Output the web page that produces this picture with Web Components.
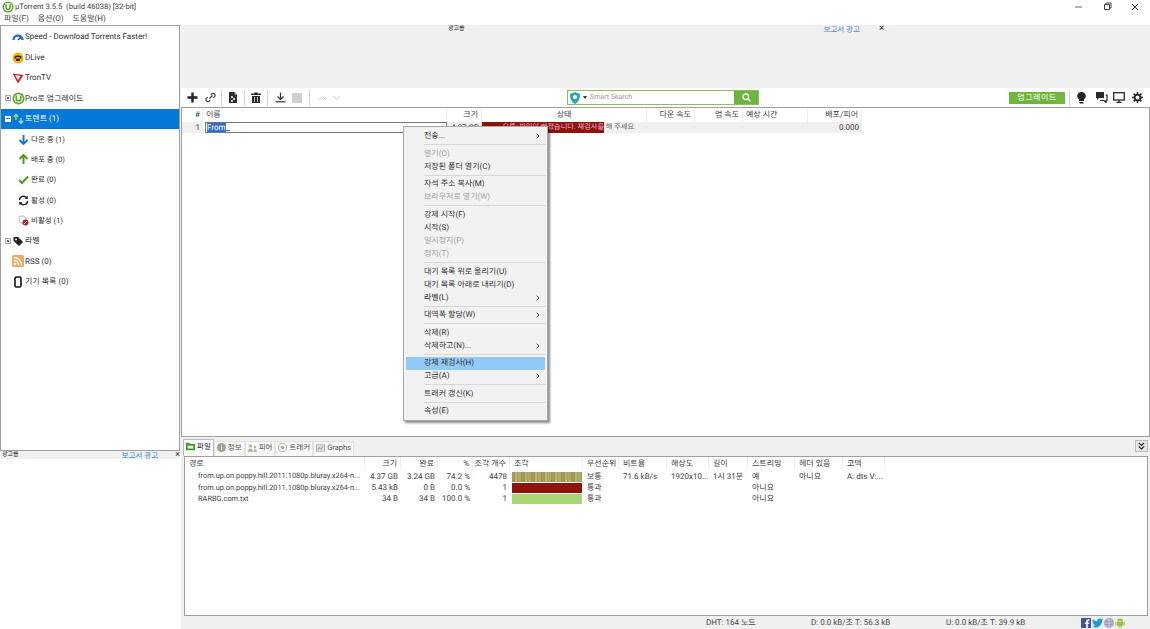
<!DOCTYPE html>
<html lang="ko">
<head>
<meta charset="utf-8">
<title>uTorrent</title>
<style>
  html, body { height: 100%; }
  body {
    margin: 0;
    height: 629px;
    overflow: hidden;
    display: flex;
    flex-direction: column;
    background: #f0f0f0;
    color: #333;
    font: 8px/1.2 Roboto, "Noto Sans CJK KR", sans-serif;
    text-rendering: geometricPrecision;
  }
</style>
</head>
<body>
  <ut-titlebar>µTorrent 3.5.5 &nbsp;(build 46038) [32-bit]</ut-titlebar>
  <ut-menubar></ut-menubar>
  <ut-main>
    <ut-sidebar slot="side">
      <ut-tree-item>
        <svg slot="icon" width="12" height="10" viewBox="0 0 12 10"><path d="M1.500 8a4.500 4.500 0 0 1 9 0" fill="none" stroke="#2f6fc4" stroke-width="2.500"/><path d="M6 8l3-3" stroke="#1c3f78" stroke-width="1.400"/></svg>
        Speed - Download Torrents Faster!
      </ut-tree-item>
      <ut-tree-item>
        <svg slot="icon" width="12" height="12" viewBox="0 0 12 12"><circle cx="6" cy="6" r="5.500" fill="#f4b410"/><path d="M2.500 5c1-2 6-2 7 0v1.500H8L7.500 5h-3L4 6.500H2.500z" fill="#222"/><rect x="4" y="6.500" width="4" height="2.500" rx="1" fill="#222"/></svg>
        DLive
      </ut-tree-item>
      <ut-tree-item>
        <svg slot="icon" width="12" height="12" viewBox="0 0 12 12"><path d="M.5 1.500L11.500 3 6 11.500z" fill="#d9202c"/><path d="M3 3l5.500 1L6 8z" fill="#fff"/></svg>
        TronTV
      </ut-tree-item>
      <ut-tree-item toggle="plus">
        <svg slot="icon" width="13" height="13" viewBox="0 0 13 13"><circle cx="6.500" cy="6.500" r="6" fill="#5da72f"/><circle cx="6.500" cy="6.500" r="4.300" fill="#fff"/><path d="M4.300 3.500v3.200a2.200 2.200 0 0 0 4.400 0V3.500" fill="none" stroke="#5da72f" stroke-width="1.700"/></svg>
        Pro로 업그레이드
      </ut-tree-item>
      <ut-tree-item toggle="minus" selected>
        <svg slot="icon" width="13" height="12" viewBox="0 0 13 12"><path d="M4 7V2M1.800 3.800L4 1.500l2.200 2.300" fill="none" stroke="#9bdc6a" stroke-width="1.500"/><path d="M9 5v5M6.800 8L9 10.400 11.200 8" fill="none" stroke="#9fd0f5" stroke-width="1.500"/></svg>
        토렌트 (1)
      </ut-tree-item>
      <ut-tree-item child>
        <svg slot="icon" width="11" height="11" viewBox="0 0 11 11"><path d="M5.500 1v8.500M1.500 6l4 4 4-4" fill="none" stroke="#2277cc" stroke-width="2"/></svg>
        다운 중 (1)
      </ut-tree-item>
      <ut-tree-item child>
        <svg slot="icon" width="11" height="11" viewBox="0 0 11 11"><path d="M5.500 10V1.500M1.500 5l4-4 4 4" fill="none" stroke="#4c9a22" stroke-width="2"/></svg>
        배포 중 (0)
      </ut-tree-item>
      <ut-tree-item child>
        <svg slot="icon" width="11" height="11" viewBox="0 0 11 11"><path d="M1 6l3 3 6-6.500" fill="none" stroke="#4c9a22" stroke-width="2"/></svg>
        완료 (0)
      </ut-tree-item>
      <ut-tree-item child>
        <svg slot="icon" width="11" height="11" viewBox="0 0 11 11"><path d="M1.500 5A4 4 0 0 1 8.800 3M9.500 6A4 4 0 0 1 2.200 8" fill="none" stroke="#222" stroke-width="1.500"/><path d="M9.800 .8v3.200H6.600zM1.200 10.200V7h3.200z" fill="#222"/></svg>
        활성 (0)
      </ut-tree-item>
      <ut-tree-item child>
        <svg slot="icon" width="11" height="11" viewBox="0 0 11 11"><circle cx="4.500" cy="4.500" r="3.500" fill="none" stroke="#ccc" stroke-width="1.500"/><circle cx="7.500" cy="7.500" r="3" fill="#c3182b"/><path d="M6 9l3-3" stroke="#fff"/></svg>
        비활성 (1)
      </ut-tree-item>
      <ut-tree-item toggle="plus">
        <svg slot="icon" width="11" height="11" viewBox="0 0 11 11"><path d="M.5 1h4.500l5 5-4 4-5.500-5z" fill="#222"/><circle cx="3" cy="3.500" r=".9" fill="#fff"/></svg>
        라벨
      </ut-tree-item>
      <ut-tree-item>
        <svg slot="icon" width="12" height="12" viewBox="0 0 12 12"><rect width="12" height="12" rx="1.500" fill="#f0a868"/><circle cx="3" cy="9" r="1.300" fill="#fff"/><path d="M2 5.500A4.500 4.500 0 0 1 6.500 10M2 2.500A7.500 7.500 0 0 1 9.500 10" fill="none" stroke="#fff" stroke-width="1.300"/></svg>
        RSS (0)
      </ut-tree-item>
      <ut-tree-item>
        <svg slot="icon" width="8" height="12" viewBox="0 0 8 12"><rect x="1" y="1" width="6" height="10" rx="1.500" fill="#fff" stroke="#111" stroke-width="1.600"/></svg>
        기기 목록 (0)
      </ut-tree-item>
    </ut-sidebar>
    <ut-ad-strip slot="side"></ut-ad-strip>

    <ut-top-ad></ut-top-ad>
    <ut-toolbar></ut-toolbar>
    <ut-torrent-table>
      <ut-context-menu>
        <ut-menu-item arrow>전송...</ut-menu-item>
        <ut-menu-sep></ut-menu-sep>
        <ut-menu-item disabled>열기(O)</ut-menu-item>
        <ut-menu-item>저장된 폴더 열기(C)</ut-menu-item>
        <ut-menu-sep></ut-menu-sep>
        <ut-menu-item>자석 주소 복사(M)</ut-menu-item>
        <ut-menu-item disabled>브라우저로 열기(W)</ut-menu-item>
        <ut-menu-sep></ut-menu-sep>
        <ut-menu-item>강제 시작(F)</ut-menu-item>
        <ut-menu-item>시작(S)</ut-menu-item>
        <ut-menu-item disabled>일시정지(P)</ut-menu-item>
        <ut-menu-item disabled>정지(T)</ut-menu-item>
        <ut-menu-sep></ut-menu-sep>
        <ut-menu-item>대기 목록 위로 올리기(U)</ut-menu-item>
        <ut-menu-item>대기 목록 아래로 내리기(D)</ut-menu-item>
        <ut-menu-item arrow>라벨(L)</ut-menu-item>
        <ut-menu-sep></ut-menu-sep>
        <ut-menu-item arrow>대역폭 할당(W)</ut-menu-item>
        <ut-menu-sep></ut-menu-sep>
        <ut-menu-item>삭제(R)</ut-menu-item>
        <ut-menu-item arrow>삭제하고(N)...</ut-menu-item>
        <ut-menu-sep></ut-menu-sep>
        <ut-menu-item active>강제 재검사(H)</ut-menu-item>
        <ut-menu-item arrow>고급(A)</ut-menu-item>
        <ut-menu-sep></ut-menu-sep>
        <ut-menu-item>트래커 갱신(K)</ut-menu-item>
        <ut-menu-sep></ut-menu-sep>
        <ut-menu-item>속성(E)</ut-menu-item>
      </ut-context-menu>
    </ut-torrent-table>
    <ut-tabs></ut-tabs>
    <ut-file-table></ut-file-table>
    <ut-statusbar></ut-statusbar>
  </ut-main>

<script>
class UtTitlebar extends HTMLElement {
  constructor(){
    super();
    this.attachShadow({mode: "open"});
  }
  connectedCallback(){
    this.shadowRoot.innerHTML = /* html */`
    <style>
      :host { display: flex; align-items: center; height: 13px; background: #fff; padding-left: 2px; gap: 1px; color: #444; font-size: 7.6px; }
      .buttons { margin-left: auto; display: flex; margin-right: 1px; }
      .buttons svg { width: 28px; height: 12px; }
    </style>
    <svg width="12" height="12" viewBox="0 0 13 13"><circle cx="6.500" cy="6.500" r="6" fill="#5da72f"/><circle cx="6.500" cy="6.500" r="4.300" fill="#fff"/><path d="M4.300 3.500v3.200a2.200 2.200 0 0 0 4.400 0V3.500" fill="none" stroke="#5da72f" stroke-width="1.700"/></svg>
    <slot></slot>
    <div class="buttons">
      <svg viewBox="0 0 28 12"><path d="M10 6h7" stroke="#666"/></svg>
      <svg viewBox="0 0 28 12"><path d="M11.500 3.500h5v5h-5zM13 3.500V2h5v5h-1.500" fill="none" stroke="#444"/></svg>
      <svg viewBox="0 0 28 12"><path d="M11 3l6 6M17 3l-6 6" stroke="#444"/></svg>
    </div>`;
  }
}

class UtMenubar extends HTMLElement {
  constructor(){
    super();
    this.attachShadow({mode: "open"});
  }
  connectedCallback(){
    this.shadowRoot.innerHTML = /* html */`
    <style>
      :host { display: flex; height: 12px; background: #fff; align-items: center; padding-left: 4px; gap: 9px; color: #444; }
    </style>
    <span>파일(F)</span><span>옵션(O)</span><span>도움말(H)</span>`;
  }
}

class UtMain extends HTMLElement {
  constructor(){
    super();
    this.attachShadow({mode: "open"});
  }
  connectedCallback(){
    this.shadowRoot.innerHTML = /* html */`
    <style>
      :host { flex: 1; min-height: 0; display: grid; grid-template-columns: 181px 1fr; }
      .side { display: flex; flex-direction: column; min-height: 0; }
      .content { display: flex; flex-direction: column; min-width: 0; min-height: 0; }
    </style>
    <div class="side"><slot name="side"></slot></div>
    <div class="content"><slot></slot></div>`;
  }
}

class UtSidebar extends HTMLElement {
  constructor(){
    super();
    this.attachShadow({mode: "open"});
  }
  connectedCallback(){
    this.shadowRoot.innerHTML = /* html */`
    <style>
      :host { display: block; height: 426px; box-sizing: border-box; background: #fff; border: 1px solid #a0a0a0; margin-right: 1px; padding-top: 1px; }
    </style>
    <slot></slot>`;
  }
}

class UtTreeItem extends HTMLElement {
  constructor(){
    super();
    this.attachShadow({mode: "open"});
  }
  connectedCallback(){
    const toggle = this.getAttribute("toggle");
    this.shadowRoot.innerHTML = /* html */`
    <style>
      :host { display: flex; align-items: center; height: 20.4px; color: #333; white-space: nowrap; }
      :host([selected]) { background: #0678d7; color: #fff; }
      :host([child]) { font-size: 7.5px; }
      .toggle { width: 6px; height: 6px; margin-left: 4px; flex: none; display: grid; place-items: center; box-sizing: border-box; border: 1px solid #aaa; background: #eee; }
      .toggle i { width: 2px; height: 2px; background: #667; }
      :host([selected]) .toggle { background: #fff; border-color: #fff; }
      :host([selected]) .toggle i { width: 4px; height: 1px; background: #0678d7; }
      .no-toggle { width: 10px; flex: none; }
      .icon { width: 14px; flex: none; display: flex; justify-content: center; }
      :host([child]) .no-toggle { width: 15px; }
      :host([child]) .icon { margin-right: 1px; }
    </style>
    ${toggle ? `<span class="toggle"><i></i></span>` : `<span class="no-toggle"></span>`}
    <span class="icon"><slot name="icon"></slot></span>
    <span><slot></slot></span>`;
  }
}

class UtAdStrip extends HTMLElement {
  constructor(){
    super();
    this.attachShadow({mode: "open"});
  }
  connectedCallback(){
    this.shadowRoot.innerHTML = /* html */`
    <style>
      :host { display: flex; flex: 1; flex-direction: column; background: #fff; }
      .bar { height: 8px; background: #f0f0f0; display: flex; align-items: center; font-size: 6px; padding: 0 0 0 2px; color: #222; margin-right: 1px; }
      a { margin-left: auto; color: #4a8bd0; font-size: 7.5px; }
      b { margin-left: 17px; font-weight: normal; color: #333; font-size: 9px; }
    </style>
    <div class="bar"><span>광고를</span><a>보고서 광고</a><b>×</b></div>`;
  }
}

class UtTopAd extends HTMLElement {
  constructor(){
    super();
    this.attachShadow({mode: "open"});
  }
  connectedCallback(){
    this.shadowRoot.innerHTML = /* html */`
    <style>
      :host { display: block; height: 63px; box-sizing: border-box; background: #f0f0f0; padding-left: 267px; }
      .bar { display: flex; height: 8px; align-items: center; font-size: 6px; color: #222; }
      a { margin-left: 359px; color: #4a8bd0; font-size: 7.5px; }
      b { margin-left: 19px; font-weight: normal; font-size: 10px; }
    </style>
    <div class="bar"><span>광고를</span><a>보고서 광고</a><b>×</b></div>`;
  }
}

class UtToolbar extends HTMLElement {
  constructor(){
    super();
    this.attachShadow({mode: "open"});
  }
  connectedCallback(){
    this.shadowRoot.innerHTML = /* html */`
    <style>
      :host { display: flex; align-items: center; height: 19px; background: #fff; padding-left: 2px; padding-right: 4px; }
      .btn { width: 18px; height: 18px; display: grid; place-items: center; flex: none; }
      .sep { width: 1px; height: 16px; background: #d4d4d4; margin: 0 2px; flex: none; }
      .search { margin-left: 222px; width: 192px; height: 15px; box-sizing: border-box; border: 1px solid #8cc152; display: flex; align-items: center; background: #fff; }
      .search .shield { margin-left: 2px; }
      .search .caret { margin: 0 3px; width: 0; height: 0; border: 2.5px solid transparent; border-top: 3px solid #333; border-bottom: 0; }
      .search span { color: #999; font-size: 7px; }
      .search .go { margin-left: auto; width: 24px; height: 100%; background: #6db33f; display: grid; place-items: center; }
      .upgrade { margin-left: auto; width: 56px; height: 12px; background: #6fb63d; color: #fff; letter-spacing: .5px; display: grid; place-items: center; }
      .right-sep { width: 1px; height: 16px; background: #d4d4d4; margin: 0 1px 0 4px; }
    </style>
    <div class="btn"><svg width="11" height="11" viewBox="0 0 11 11"><path d="M5.500 .5v10M.5 5.500h10" stroke="#222" stroke-width="2.400"/></svg></div>
    <div class="btn"><svg width="11" height="11" viewBox="0 0 11 11" fill="none" stroke="#444" stroke-width="1.200"><path d="M4.500 6.500l3-3M5.800 2.800l1-1a2 2 0 0 1 2.800 2.800l-1.300 1.300M5.200 8.200l-1 1a2 2 0 0 1-2.800-2.800l1.300-1.300"/></svg></div>
    <div class="sep"></div>
    <div class="btn"><svg width="10" height="11" viewBox="0 0 10 11"><path d="M1 0h5.500L9 3v8H1z" fill="#2b2b2b"/><path d="M6.500 0L9 3H6.500z" fill="#999"/><path d="M3 4h2v2H3zM5 6h2v2H5zM3 8h2v2H3z" fill="#ccc"/></svg></div>
    <div class="sep"></div>
    <div class="btn"><svg width="10" height="11" viewBox="0 0 10 11"><path d="M3.500.5h3l.5 1h3V3H0V1.500h3zM1 4h8v7H1z" fill="#2b2b2b"/><path d="M3.500 5v5M6.500 5v5" stroke="#fff" stroke-width=".7"/></svg></div>
    <div class="sep"></div>
    <div class="btn" style="margin-left:1px"><svg width="11" height="11" viewBox="0 0 11 11"><path d="M5.500 .5v6M2.500 4.500l3 3 3-3" fill="none" stroke="#333" stroke-width="1.200"/><path d="M.5 9.800h10" stroke="#333" stroke-width="1.200"/></svg></div>
    <div class="btn" style="margin-left:-1px"><svg width="10" height="10"><rect width="10" height="10" fill="#d0d0d0"/></svg></div>
    <div class="sep" style="margin-left:3px"></div>
    <div class="btn" style="margin-left:1px"><svg width="9" height="6" viewBox="0 0 9 6"><path d="M1 5l3.500-3.500L8 5" fill="none" stroke="#ccc"/></svg></div>
    <div class="btn" style="margin-left:-4px"><svg width="9" height="6" viewBox="0 0 9 6"><path d="M1 1l3.500 3.500L8 1" fill="none" stroke="#ccc"/></svg></div>
    <div class="search">
      <svg class="shield" width="10" height="12" viewBox="0 0 10 12"><path d="M5 0l5 2c0 4-1 8-5 10C1 10 0 6 0 2z" fill="#2aa7b8"/><circle cx="5" cy="5" r="2" fill="#fff"/></svg>
      <i class="caret"></i>
      <span>Smart Search</span>
      <div class="go"><svg width="9" height="9" viewBox="0 0 9 9" fill="none" stroke="#fff" stroke-width="1.300"><circle cx="3.800" cy="3.800" r="2.800"/><path d="M5.800 5.800L8.500 8.500"/></svg></div>
    </div>
    <div class="upgrade">업그레이드</div>
    <div class="right-sep"></div>
    <div class="btn" style="margin-left:1px"><svg width="9" height="12" viewBox="0 0 9 12"><path d="M4.500 0a4 4 0 0 1 2.500 7.300V9H2V7.300A4 4 0 0 1 4.500 0z" fill="#222"/><path d="M2.500 10h4v1.500h-4z" fill="#222"/></svg></div>
    <div class="btn" style="margin-left:3px"><svg width="12" height="11" viewBox="0 0 12 11"><path d="M0 0h8v6H3L1 8V6H0z" fill="#2b2b2b"/><path d="M9.500 3H11v5.500H10V10.500L8 8.500H4" fill="none" stroke="#2b2b2b" stroke-width="1.200"/></svg></div>
    <div class="btn" style="margin-left:-1px"><svg width="12" height="11" viewBox="0 0 12 11" fill="none" stroke="#2b2b2b" stroke-width="1.300"><rect x=".7" y=".7" width="10.600" height="7.300"/><path d="M3.500 10.300h5M6 8v2"/></svg></div>
    <div class="btn"><svg width="11" height="11" viewBox="0 0 11 11"><circle cx="5.500" cy="5.500" r="2.900" fill="none" stroke="#222" stroke-width="1.800"/><path d="M5.500 0v11M0 5.500h11M1.600 1.600l7.800 7.800M9.400 1.600l-7.800 7.800" stroke="#222" stroke-width="1.500" stroke-dasharray="2 7 2 0"/></svg></div>`;
  }
}

class UtTorrentTable extends HTMLElement {
  constructor(){
    super();
    this.attachShadow({mode: "open"});
  }
  connectedCallback(){
    this.shadowRoot.innerHTML = /* html */`
    <style>
      :host { display: block; height: 330px; box-sizing: border-box; background: #fff; border: 1px solid #a0a0a0; position: relative; color: #444; }
      .grid { display: grid; width: 680px; grid-template-columns: 21px 244px 35px 165px 48px 48px 65px 54px; }
      .grid > div { height: 14px; display: flex; align-items: center; padding: 0 3px; box-sizing: border-box; white-space: nowrap; overflow: hidden; }
      .head > div { border-right: 1px solid #eee; }
      .head > div:first-child { padding-right: 2px; }
      .r { justify-content: flex-end; }
      .c { justify-content: center; }
      .row { background: #f0f0f0; height: 11px !important; }
      .editor { padding: 0 0 0 1px !important; background: #fff; border: 1px solid #777; margin-left: 2px; height: 11px !important; }
      .editor mark { background: #2f6fc9; color: #fff; }
      .editor i { width: 4px; height: 1px; background: #2f6fc9; align-self: flex-end; margin-bottom: 1px; }
      .state { padding: 0 !important; font-size: 7.2px; color: #666; }
      .state span { background: #8d1409; color: #ead; width: 122px; height: 100%; display: inline-flex; align-items: center; justify-content: flex-end; flex: none; }
      .state em { font-style: normal; }
    </style>
    <div class="grid head">
      <div class="r">#</div><div>이름</div><div class="r">크기</div><div class="c">상태</div>
      <div class="r">다운 속도</div><div class="r">업 속도</div><div>예상 시간</div><div class="r">배포/피어</div>
    </div>
    <div class="grid">
      <div class="row r">1</div>
      <div class="row editor"><mark>From</mark><i></i></div>
      <div class="row r">4.37 GB</div>
      <div class="row state"><span>오류: 파일이 빠졌습니다. 재검사를</span><em>&nbsp;해 주세요.</em></div>
      <div class="row"></div><div class="row"></div><div class="row"></div>
      <div class="row r">0.000</div>
    </div>
    <slot></slot>`;
  }
}

class UtContextMenu extends HTMLElement {
  constructor(){
    super();
    this.attachShadow({mode: "open"});
  }
  connectedCallback(){
    this.shadowRoot.innerHTML = /* html */`
    <style>
      :host { position: absolute; left: 221px; top: 18px; width: 145px; box-sizing: border-box; padding: 2.5px 2px 2px; background: #f2f2f2; border: 1px solid #a8a8a8; box-shadow: 2px 2px 2px rgba(0,0,0,.45); display: block; color: #333; }
    </style>
    <slot></slot>`;
  }
}

class UtMenuItem extends HTMLElement {
  constructor(){
    super();
    this.attachShadow({mode: "open"});
  }
  connectedCallback(){
    this.shadowRoot.innerHTML = /* html */`
    <style>
      :host { display: flex; align-items: center; height: 13.1px; padding-left: 18px; white-space: nowrap; }
      :host([disabled]) { color: #a0a0a0; }
      :host([active]) { background: #91c9f7; }
      svg { margin-left: auto; margin-right: 5px; }
    </style>
    <slot></slot>
    ${this.hasAttribute("arrow") ? `<svg width="4" height="6" viewBox="0 0 4 6"><path d="M.7.7L3 3 .7 5.300" fill="none" stroke="#444"/></svg>` : ""}`;
  }
}

class UtMenuSep extends HTMLElement {
  constructor(){
    super();
    this.attachShadow({mode: "open"});
  }
  connectedCallback(){
    this.shadowRoot.innerHTML = /* html */`
    <style>
      :host { display: block; height: 1px; margin: 1.7px 0 1.7px 18px; background: #d7d7d7; }
    </style>`;
  }
}

class UtTabs extends HTMLElement {
  constructor(){
    super();
    this.attachShadow({mode: "open"});
  }
  connectedCallback(){
    this.shadowRoot.innerHTML = /* html */`
    <style>
      :host { display: flex; align-items: flex-end; height: 19px; padding-left: 2px; background: #f0f0f0; }
      .tab { display: flex; align-items: center; gap: 2px; height: 15px; padding: 0 2px 3px; box-sizing: border-box; background: #f7f7f7; border: 1px solid #e2e2e2; border-bottom: 0; color: #555; font-size: 7.5px; }
      .tab svg { width: 9px; flex: none; }
      .on { background: #fff; height: 17px; border-color: #bbb; color: #222; }
      .collapse { margin-left: auto; margin-right: 2px; margin-bottom: 4px; width: 13px; height: 12px; box-sizing: border-box; border: 1px solid #bbb; background: #e6e6e6; display: grid; place-items: center; }
    </style>
    <div class="tab on"><svg height="9" viewBox="0 0 11 9"><path d="M0 0h4l1 1.500h6V9H0z" fill="#3e9a2a"/><rect x="2" y="3.500" width="7" height="3.500" fill="#dff0d0"/></svg>파일</div>
    <div class="tab"><svg height="9" viewBox="0 0 10 10"><circle cx="5" cy="5" r="5" fill="#9aa48f"/><path d="M5 4v4M5 2v1" stroke="#fff"/></svg>정보</div>
    <div class="tab"><svg height="8" viewBox="0 0 11 9" fill="#aab09a"><circle cx="3" cy="2" r="2"/><path d="M0 9c0-5 6-5 6 0z"/><circle cx="8.500" cy="3.500" r="1.500"/><path d="M6.500 9c0-4 4.500-4 4.500 0z"/></svg>피어</div>
    <div class="tab"><svg height="9" viewBox="0 0 10 10"><circle cx="5" cy="5" r="4.500" fill="none" stroke="#aab09a"/><circle cx="5" cy="5" r="2" fill="#aab09a"/></svg>트래커</div>
    <div class="tab"><svg height="8" viewBox="0 0 11 9"><rect width="11" height="9" fill="#aab09a"/><rect x="1" y="1" width="9" height="7" fill="#ddd"/><path d="M2 7l2-3 2 2 3-3" fill="none" stroke="#889"/></svg>Graphs</div>
    <div class="collapse"><svg width="7" height="8" viewBox="0 0 7 8" fill="none" stroke="#222" stroke-width="1.200"><path d="M.8 .8L3.500 3.500 6.200 .8M.8 4.300L3.500 7 6.200 4.300"/></svg></div>`;
  }
}

class UtFileTable extends HTMLElement {
  constructor(){
    super();
    this.attachShadow({mode: "open"});
  }
  static get rows(){
    return [
      ["from.up.on.poppy.hill.2011.1080p.bluray.x264-n...", "4.37 GB", "3.24 GB", "74.2 %", "4478", "mixed", "보통", "71.6 kB/s", "1920x10...", "1시 31분", "예", "아니요", "A: dts V:..."],
      ["from.up.on.poppy.hill.2011.1080p.bluray.x264-n...", "5.43 kB", "0 B", "0.0 %", "1", "red", "통과", "", "", "", "아니요", "", ""],
      ["RARBG.com.txt", "34 B", "34 B", "100.0 %", "1", "green", "통과", "", "", "", "아니요", "", ""]
    ];
  }
  connectedCallback(){
    const heads = ["경로","크기","완료","%","조각 개수","조각","우선순위","비트율","해상도","길이","스트리밍","헤더 있음","코덱"];
    const right = [1,2,3,4];
    const headCells = heads.map((h,i) => `<div class="${right.includes(i) ? "r" : ""}">${h}</div>`).join("");
    const bodyCells = UtFileTable.rows.map(row => row.map((v,i) => {
      if (i === 5) return `<div class="bar-cell"><i class="${v}"></i></div>`;
      return `<div class="${right.includes(i) ? "r" : ""} ${i === 0 ? "path" : ""}">${v}</div>`;
    }).join("")).join("");
    this.shadowRoot.innerHTML = /* html */`
    <style>
      :host { flex: 1; display: block; min-height: 0; margin: 0 2px 0 3px; box-sizing: border-box; background: #fff; border: 1px solid #a0a0a0; color: #444; }
      .grid { display: grid; width: 701px; grid-template-columns: 180px 36px 37px 35px 37px 73px 36px 48px 42px 39px 47px 48px 42px; }
      .grid > div { display: flex; align-items: center; padding: 0 3px 0 4px; box-sizing: border-box; white-space: nowrap; overflow: hidden; }
      .head { height: 14px; padding-bottom: 1px; box-sizing: border-box; }
      .head > div { border-right: 1px solid #eee; }
      .body { grid-auto-rows: 11.3px; }
      .r { justify-content: flex-end; }
      .path { padding-left: 13px !important; padding-right: 0 !important; font-size: 7.4px; }
      .bar-cell { padding: 0 1px 0 2px !important; }
      .bar-cell i { display: block; width: 100%; height: 10px; }
      .mixed { background: repeating-linear-gradient(90deg, #a89c5c 0 2px, #8f9a55 2px 3px, #c4b078 3px 5px, #9aa25e 5px 6px, #b5a868 6px 9px, #8f9a55 9px 10px); }
      .red { background: #8d1409; }
      .green { background: #a8d574; }
    </style>
    <div class="grid head">${headCells}</div>
    <div class="grid body">${bodyCells}</div>`;
  }
}

class UtStatusbar extends HTMLElement {
  constructor(){
    super();
    this.attachShadow({mode: "open"});
  }
  connectedCallback(){
    this.shadowRoot.innerHTML = /* html */`
    <style>
      :host { display: flex; align-items: center; height: 13px; background: #f0f0f0; color: #444; white-space: nowrap; }
      .dht { margin-left: 525px; width: 105px; }
      .down { width: 135px; }
      .up { width: 135px; }
      .icons { display: flex; gap: 1px; align-items: center; }
    </style>
    <span class="dht">DHT: 164 노드</span>
    <span class="down">D: 0.0 kB/초 T: 56.3 kB</span>
    <span class="up">U: 0.0 kB/초 T: 39.9 kB</span>
    <div class="icons">
      <svg width="10" height="10" viewBox="0 0 10 10"><rect width="10" height="10" fill="#3b5998"/><path d="M6.800 10V6h1.400l.2-1.600H6.800V3.500c0-.5.2-.8.8-.8h.9V1.300C8 1.200 7.600 1.200 7.100 1.200 6 1.200 5.200 1.900 5.200 3.200v1.200H3.800V6h1.400v4z" fill="#fff"/></svg>
      <svg width="11" height="10" viewBox="0 0 11 10"><path d="M11 1.500l-1.200.3c.5-.3.8-.7 1-1.200-.5.300-1 .5-1.500.6A2.300 2.300 0 0 0 5.400 3.300 6.500 6.500 0 0 1 .8 1a2.300 2.300 0 0 0 .7 3c-.4 0-.7-.1-1-.3 0 1.100.8 2 1.800 2.300-.3.100-.7.100-1 0 .3.900 1.100 1.500 2.100 1.600A4.700 4.700 0 0 1 0 8.500 6.500 6.500 0 0 0 10 3c.4-.4.800-.9 1-1.500z" fill="#1d9bd8"/></svg>
      <svg width="10" height="10" viewBox="0 0 10 10"><circle cx="5" cy="5" r="5" fill="#9c9cc0"/><path d="M0 5h10M5 0v10M1.500 2h7M1.500 8h7" stroke="#ddd" stroke-width=".6"/></svg>
      <svg width="10" height="10" viewBox="0 0 10 10" fill="#9ac43c"><path d="M2 3.500a3 3 0 0 1 6 0zM2 4h6v4H6.500v2h-1V8h-1v2h-1V8H2zM.3 4h1.200v3.500H.3zM8.500 4h1.200v3.500H8.500z"/></svg>
    </div>`;
  }
}

customElements.define('ut-titlebar', UtTitlebar);
customElements.define('ut-menubar', UtMenubar);
customElements.define('ut-main', UtMain);
customElements.define('ut-sidebar', UtSidebar);
customElements.define('ut-tree-item', UtTreeItem);
customElements.define('ut-ad-strip', UtAdStrip);
customElements.define('ut-top-ad', UtTopAd);
customElements.define('ut-toolbar', UtToolbar);
customElements.define('ut-torrent-table', UtTorrentTable);
customElements.define('ut-context-menu', UtContextMenu);
customElements.define('ut-menu-item', UtMenuItem);
customElements.define('ut-menu-sep', UtMenuSep);
customElements.define('ut-tabs', UtTabs);
customElements.define('ut-file-table', UtFileTable);
customElements.define('ut-statusbar', UtStatusbar);
</script>
</body>
</html>
